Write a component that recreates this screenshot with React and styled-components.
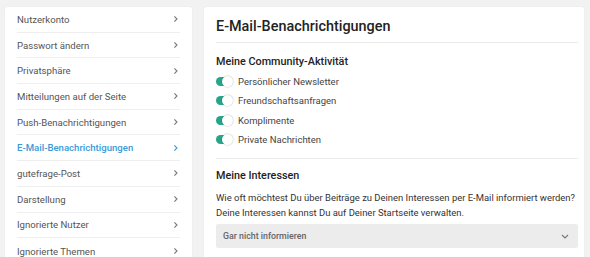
import React from 'react';
import styled, { createGlobalStyle } from 'styled-components';

const GlobalStyle = createGlobalStyle`
  html, body {
    margin: 0;
    padding: 0;
    background: #f2f2f2;
    font-family: Roboto, 'Liberation Sans', sans-serif;
  }
`;

const Page = styled.div`
  display: flex;
  align-items: flex-start;
  gap: 12px;
  padding: 7px 6px 0 5px;
`;

const Menu = styled.nav`
  width: 187px;
  flex-shrink: 0;
  background: #fff;
  border-radius: 3px;
  box-shadow: 0 0 2px rgba(0, 0, 0, 0.05);
`;

const MenuItem = styled.div`
  display: flex;
  align-items: center;
  justify-content: space-between;
  height: 25.7px;
  margin: 0 12px;
  box-sizing: border-box;
  border-bottom: 1px solid #efefef;
  font-size: 9.6px;
  color: ${(p) => (p.$active ? '#3b9ad8' : '#555')};
  font-weight: ${(p) => (p.$active ? 500 : 400)};
  &:last-child {
    border-bottom: none;
  }
`;

const Chevron = ({ color }) => (
  <svg width="6" height="8" viewBox="0 0 6 8" style={{ marginRight: 1 }}>
    <path d="M1.4 1.3 L4 4 L1.4 6.7" fill="none" stroke={color} strokeWidth="1.1" />
  </svg>
);

const Card = styled.section`
  flex: 1;
  min-width: 0;
  background: #fff;
  border-radius: 3px;
  padding: 0 6px 0 12px;
  min-height: 260px;
  box-shadow: 0 0 2px rgba(0, 0, 0, 0.05);
`;

const Title = styled.h1`
  margin: 0;
  padding: 11px 0 6px;
  font-size: 14.4px;
  font-weight: 500;
  color: #222;
  line-height: 18px;
  border-bottom: 1px solid #ececec;
`;

const Section = styled.div`
  padding: ${(p) => (p.$last ? '9px 0 10px' : '11px 0 8.5px')};
  border-bottom: ${(p) => (p.$last ? 'none' : '1px solid #ececec')};
`;

const SectionTitle = styled.h2`
  margin: 0 0 ${(p) => p.$gap}px;
  font-size: 10.8px;
  font-weight: 500;
  color: #222;
  line-height: 16px;
`;

const ToggleRow = styled.label`
  display: flex;
  align-items: center;
  gap: 6px;
  height: 19.3px;
  font-size: 9.5px;
  color: #444;
`;

const Track = styled.span`
  position: relative;
  width: 16px;
  height: 9px;
  border-radius: 5px;
  background: #27a58b;
`;

const Knob = styled.span`
  position: absolute;
  right: -1px;
  top: -1px;
  width: 11px;
  height: 11px;
  border-radius: 50%;
  background: #fff;
  box-shadow: 0 0 1px 0.5px rgba(0, 0, 0, 0.2);
`;

const Text = styled.p`
  margin: 0;
  font-size: 9.45px;
  line-height: 15px;
  color: #333;
  white-space: nowrap;
`;

const Select = styled.div`
  display: flex;
  align-items: center;
  justify-content: space-between;
  margin-top: 4px;
  height: 24px;
  padding: 0 9px 0 7px;
  background: #ececec;
  border-radius: 2px;
  font-size: 8.8px;
  font-weight: 500;
  color: #666;
`;

const menu = [
  'Nutzerkonto',
  'Passwort ändern',
  'Privatsphäre',
  'Mitteilungen auf der Seite',
  'Push-Benachrichtigungen',
  'E-Mail-Benachrichtigungen',
  'gutefrage-Post',
  'Darstellung',
  'Ignorierte Nutzer',
  'Ignorierte Themen',
];

const toggles = [
  'Persönlicher Newsletter',
  'Freundschaftsanfragen',
  'Komplimente',
  'Private Nachrichten',
];

export default function App() {
  return (
    <>
      <GlobalStyle />
      <Page>
        <Menu>
          {menu.map((m) => {
            const active = m === 'E-Mail-Benachrichtigungen';
            return (
              <MenuItem key={m} $active={active}>
                <span>{m}</span>
                <Chevron color={active ? '#3b9ad8' : '#777'} />
              </MenuItem>
            );
          })}
        </Menu>
        <Card>
          <Title>E-Mail-Benachrichtigungen</Title>
          <Section>
            <SectionTitle $gap={2}>Meine Community-Aktivität</SectionTitle>
            {toggles.map((t) => (
              <ToggleRow key={t}>
                <Track>
                  <Knob />
                </Track>
                {t}
              </ToggleRow>
            ))}
          </Section>
          <Section $last>
            <SectionTitle $gap={6.5}>Meine Interessen</SectionTitle>
            <Text>
              Wie oft möchtest Du über Beiträge zu Deinen Interessen per E-Mail informiert werden?
              <br />
              Deine Interessen kannst Du auf Deiner Startseite verwalten.
            </Text>
            <Select>
              <span>Gar nicht informieren</span>
              <svg width="8" height="5" viewBox="0 0 8 5">
                <path d="M1 1 L4 4 L7 1" fill="none" stroke="#777" strokeWidth="1.1" />
              </svg>
            </Select>
          </Section>
        </Card>
      </Page>
    </>
  );
}
